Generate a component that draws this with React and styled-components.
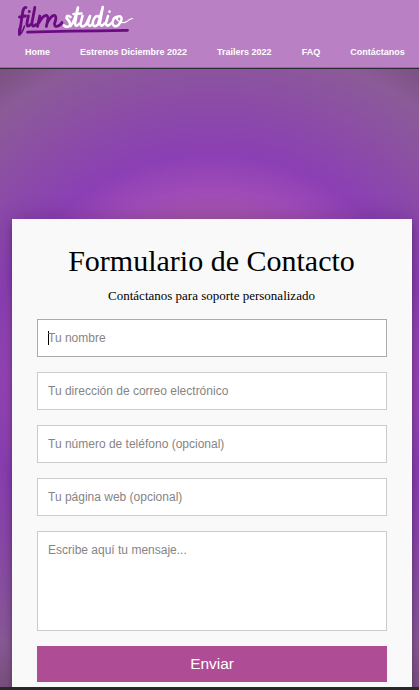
import React from "react";
import styled, { createGlobalStyle } from "styled-components";

const GlobalStyle = createGlobalStyle`
  * { box-sizing: border-box; }
  body { margin: 0; overflow: hidden; }
`;

const Page = styled.div`
  display: flex;
  flex-direction: column;
  width: 419px;
  height: 690px;
  overflow: hidden;
  border-bottom: 3px solid #29292d;
  font-family: "Liberation Serif", serif;
`;

const Header = styled.header`
  flex: none;
  height: 69px;
  background: #b980c3;
  border-bottom: 1px solid #2b2b33;
  box-shadow: inset 0 -1px #8a718d;
`;

const Logo = styled.svg`
  display: block;
  width: 130px;
  height: 42px;
  margin-left: 10px;
`;

const Nav = styled.nav`
  display: flex;
  gap: 30px;
  padding: 4px 0 0 25px;
`;

const NavLink = styled.a`
  color: #fff;
  font: bold 9px/12px "Liberation Sans", sans-serif;
  white-space: nowrap;
`;

const Main = styled.main`
  flex: 1;
  min-height: 0;
  padding: 150px 7px 0 12px;
  overflow: hidden;
  background: radial-gradient(circle at 212px 309px, #b45a8c 0%, #a554ac 43%, #9f4bb8 50%, #8b3fb4 60%, #8b5b98 90%, #7b5080 100%);
`;

const Card = styled.form`
  display: flex;
  flex-direction: column;
  height: 500px;
  padding: 25px;
  background: #f9f9f9;
  box-shadow: 0 0 20px rgba(0, 0, 0, 0.2), 0 5px 5px rgba(0, 0, 0, 0.24);
`;

const Title = styled.h1`
  margin: 0 1px 0 0;
  font-size: 30px;
  font-weight: 400;
  line-height: 34px;
  text-align: center;
`;

const Subtitle = styled.p`
  margin: 10px 1px 15px 0;
  font-size: 13px;
  line-height: 16px;
  text-align: center;
`;

const Field = styled.div`
  display: flex;
  flex: none;
  height: ${(p) => (p.$tall ? 100 : 38)}px;
  margin-bottom: 15px;
  padding: 10px;
  border: 1px solid ${(p) => (p.$focused ? "#aaa" : "#ccc")};
  background: #fff;
  color: #858585;
  font: 12px/16px "Liberation Sans", sans-serif;
`;

const Caret = styled.span`
  width: 1px;
  height: 14px;
  margin: 1px -1px 0 0;
  background: #000;
`;

const Submit = styled.button`
  flex: none;
  height: 36px;
  padding: 0;
  border: 0;
  background: #ae4c96;
  color: #fff;
  font: 15.4px "Liberation Sans", sans-serif;
`;

const links = ["Home", "Estrenos Diciembre 2022", "Trailers 2022", "FAQ", "Contáctanos"];

function Wordmark() {
  return (
    <Logo viewBox="10 0 130 42" fill="none" strokeLinecap="round" strokeLinejoin="round" role="img" aria-label="filmstudio">
      <g stroke="#6c0a83" strokeWidth="2.8">
        <path d="M26 7.500Q23.500 7 22.500 13L19.500 34M19.500 17L25.500 16" />
        <path d="M20.500 26Q18 30 19 35Q22 34 24.500 26" strokeWidth="1.6" />
        <path d="M28.300 16L26.800 24Q27.500 28 30.500 24.500M29.300 11.500v.2" />
        <path d="M34.800 7.500L32 22.500Q32 28.500 36 24.500" />
        <path d="M39.800 16L37.500 26.500M38.800 23Q43.500 14.500 47 15.500Q49 17 46.300 26.500M47.300 23Q51.500 14.500 55 15.500Q57 17 54.500 23.500Q54.500 27.500 58 26Q61 25 62 22.500" />
        <path d="M27.500 32.200Q65 31 127.500 30.300" />
      </g>
      <g stroke="#fff" strokeWidth="2.6">
        <path d="M70.500 17Q67 14 66.500 18Q71.500 23 69.500 26Q66.500 28 64 25.500" />
        <path d="M70.500 26Q74 23 78 7.500L75 23Q75.500 28 79 24M73.500 14L81.500 13.500" />
        <path d="M82.500 16L80.500 23.500Q81 29 86 24.500L90 16L88 23.500Q89 28 92.500 24" />
        <path d="M99.500 17Q95 14 92.800 22Q93 29 98 24.500L102.800 7L99.800 23Q101 28 104.500 23.500" />
        <path d="M108 16L105.800 23.500Q107 28 111.500 23M109.500 11.500v.2" />
        <path d="M118 16.500Q113 17 112.500 22.500Q113.500 28.500 118.500 25Q123.500 18.500 120.500 16.500Q117 15.500 117 19" strokeWidth="2.400" />
        <path d="M117.500 20Q122 24.500 127 21.500Q129 19 132.500 18.500" strokeWidth="1.2" />
      </g>
    </Logo>
  );
}

export default function App() {
  return (
    <Page>
      <GlobalStyle />
      <Header>
        <Wordmark />
        <Nav>{links.map((label) => <NavLink key={label}>{label}</NavLink>)}</Nav>
      </Header>
      <Main>
        <Card>
          <Title>Formulario de Contacto</Title>
          <Subtitle>Contáctanos para soporte personalizado</Subtitle>
          <Field $focused><Caret />Tu nombre</Field>
          <Field>Tu dirección de correo electrónico</Field>
          <Field>Tu número de teléfono (opcional)</Field>
          <Field>Tu página web (opcional)</Field>
          <Field $tall>Escribe aquí tu mensaje...</Field>
          <Submit type="button">Enviar</Submit>
        </Card>
      </Main>
    </Page>
  );
}
